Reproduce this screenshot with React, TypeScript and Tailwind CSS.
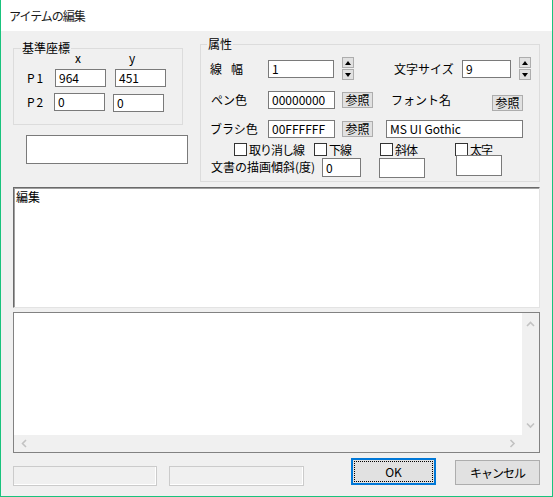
import React from "react";

// Win32 style "アイテムの編集" dialog

const Box = ({ className = "", children }: { className?: string; children?: React.ReactNode }) => (
  <div className={"bg-white border border-[#7a7a7a] pl-[3px] flex items-center leading-[14px] " + className}>
    {children}
  </div>
);

const RefButton = ({ className = "" }: { className?: string }) => (
  <div className={"w-[31px] h-[16px] bg-[#e1e1e1] border border-[#adadad] flex items-center justify-center leading-[14px] " + className}>
    参照
  </div>
);

const Spinner = ({ className = "" }: { className?: string }) => (
  <div className={"flex flex-col gap-[1px] " + className}>
    <div className="w-[12px] h-[11px] bg-[#e1e1e1] border border-[#adadad] flex items-center justify-center">
      <svg width="6" height="4" viewBox="0 0 6 4">
        <polygon points="0,4 3,0 6,4" fill="#000" />
      </svg>
    </div>
    <div className="w-[12px] h-[11px] bg-[#e1e1e1] border border-[#adadad] flex items-center justify-center">
      <svg width="6" height="4" viewBox="0 0 6 4">
        <polygon points="0,0 6,0 3,4" fill="#000" />
      </svg>
    </div>
  </div>
);

const Check = ({ label, className = "" }: { label: string; className?: string }) => (
  <div className={"flex items-center h-[13px] shrink-0 " + className}>
    <div className="w-[13px] h-[13px] bg-white border border-[#333333]" />
    <span className="ml-[2px] leading-[13px] tracking-[-1px]">{label}</span>
  </div>
);

const Chevron = ({ dir }: { dir: "up" | "down" | "left" | "right" }) => {
  const pts = {
    up: "1,5 4.5,1.5 8,5",
    down: "1,1.5 4.5,5 8,1.5",
    left: "5,1 1.5,4.5 5,8",
    right: "1.5,1 5,4.5 1.5,8",
  }[dir];
  const vertical = dir === "up" || dir === "down";
  return (
    <svg width={vertical ? 9 : 7} height={vertical ? 7 : 9} viewBox={vertical ? "0 0 9 7" : "0 0 7 9"}>
      <polyline points={pts} fill="none" stroke="#c2c2c2" strokeWidth="1.6" />
    </svg>
  );
};

export default function App() {
  return (
    <div className="w-[553px] h-[497px] bg-[#f0f0f0] border-l border-r border-b border-[#19c37d] flex flex-col text-[12px] leading-[14px] text-black font-['Noto_Sans_CJK_JP','Noto_Sans',sans-serif]">
      {/* Title bar */}
      <div className="h-[31px] bg-white flex items-center pl-[8px] text-[12px] tracking-[-1px] text-[#1a1a1a]">
        アイテムの編集
      </div>

      <div className="flex flex-col px-[12px]">
        {/* Top section */}
        <div className="flex items-start mt-[13px]">
          {/* Left column */}
          <div className="w-[187px] shrink-0 flex flex-col">
            <div className="relative mt-[4px] w-[170px] h-[77px] border border-[#dcdcdc]">
              <span className="absolute left-[7px] top-[-8px] px-[1px] bg-[#f0f0f0]">基準座標</span>
              <div className="flex h-[14px] mt-[2px]">
                <span className="ml-[61px]">x</span>
                <span className="ml-[48px]">y</span>
              </div>
              <div className="flex items-center h-[18px] mt-[4px]">
                <span className="w-[28px] ml-[13px] tracking-[2px]">P1</span>
                <Box className="w-[51px] h-[18px]">964</Box>
                <Box className="w-[51px] h-[18px] ml-[9px]">451</Box>
              </div>
              <div className="flex items-start h-[19px] mt-[6px]">
                <span className="w-[27px] ml-[13px] mt-[2px] tracking-[2px]">P2</span>
                <Box className="w-[51px] h-[18px]">0</Box>
                <Box className="w-[51px] h-[18px] ml-[8px] mt-[1px]">0</Box>
              </div>
            </div>
            <div className="mt-[10px] ml-[13px] w-[162px] h-[29px] bg-white border border-[#7a7a7a]" />
          </div>

          {/* 属性 group */}
          <div className="relative flex-1 h-[138px] border border-[#dcdcdc] flex flex-col">
            <span className="absolute left-[6px] top-[-8px] px-[1px] bg-[#f0f0f0]">属性</span>

            <div className="flex items-center h-[23px] mt-[12px]">
              <span className="w-[58px] ml-[9px] flex shrink-0">
                <span>線</span>
                <span className="ml-[9px]">幅</span>
              </span>
              <Box className="w-[66px] h-[18px]">1</Box>
              <Spinner className="ml-[8px]" />
              <span className="w-[68px] ml-[40px] shrink-0">文字サイズ</span>
              <Box className="w-[49px] h-[18px]">9</Box>
              <Spinner className="ml-[8px]" />
            </div>

            <div className="flex items-center h-[18px] mt-[11px]">
              <span className="w-[57px] ml-[10px] shrink-0">ペン色</span>
              <Box className="w-[67px] h-[18px]">00000000</Box>
              <RefButton className="ml-[7px]" />
              <span className="w-[101px] ml-[18px] shrink-0">フォント名</span>
              <RefButton className="self-start mt-[4px]" />
            </div>

            <div className="flex items-center h-[18px] mt-[11px]">
              <span className="w-[58px] ml-[9px] shrink-0">ブラシ色</span>
              <Box className="w-[67px] h-[18px]">00FFFFFF</Box>
              <RefButton className="ml-[7px]" />
              <Box className="w-[137px] h-[18px] ml-[13px]">MS UI Gothic</Box>
            </div>

            <div className="flex items-center h-[13px] mt-[5px] ml-[33px]">
              <Check label="取り消し線" className="w-[80px]" />
              <Check label="下線" className="w-[66px]" />
              <Check label="斜体" className="w-[75px]" />
              <Check label="太字" />
            </div>

            <div className="flex items-start h-[23px] mt-[-1px]">
              <span className="w-[111px] ml-[10px] mt-[5px] shrink-0 whitespace-nowrap">文書の描画傾斜(度)</span>
              <Box className="w-[39px] h-[19px] mt-[3px]">0</Box>
              <Box className="w-[46px] h-[20px] mt-[3px] ml-[18px]" />
              <Box className="w-[46px] h-[21px] ml-[31px]" />
            </div>
          </div>
        </div>

        {/* Edit area */}
        <div className="mt-[5px] h-[121px] bg-white border-t border-l border-[#6a6a6a] border-r border-b border-r-[#e3e3e3] border-b-[#e3e3e3] shadow-[inset_1px_1px_0_#a0a0a0] pl-[2px] pt-[2px]">
          編集
        </div>

        {/* List box with scrollbars */}
        <div className="mt-[4px] h-[141px] border border-[#828282] bg-[#f0f0f0] grid grid-cols-[1fr_17px] grid-rows-[1fr_17px]">
          <div className="bg-white" />
          <div className="flex flex-col items-center justify-between pt-[8px] pb-[6px]">
            <Chevron dir="up" />
            <Chevron dir="down" />
          </div>
          <div className="flex items-center justify-between pl-[7px] pr-[6px]">
            <Chevron dir="left" />
            <Chevron dir="right" />
          </div>
          <div />
        </div>

        {/* Bottom buttons */}
        <div className="flex items-start mt-[5px]">
          <div className="w-[144px] h-[20px] mt-[8px] border border-[#cbcbcb] shadow-[inset_-1px_-1px_0_#ffffff]" />
          <div className="w-[135px] h-[20px] mt-[8px] ml-[12px] border border-[#cbcbcb] shadow-[inset_-1px_-1px_0_#ffffff]" />
          <div className="w-[85px] h-[27px] ml-[47px] bg-[#e1e1e1] border-2 border-[#0078d7] p-[1px]">
            <div className="w-full h-full border border-dotted border-black flex items-center justify-center">
              OK
            </div>
          </div>
          <div className="w-[85px] h-[25px] mt-[2px] ml-[19px] bg-[#e1e1e1] border border-[#adadad] flex items-center justify-center tracking-[-1px]">
            キャンセル
          </div>
        </div>
      </div>
    </div>
  );
}
